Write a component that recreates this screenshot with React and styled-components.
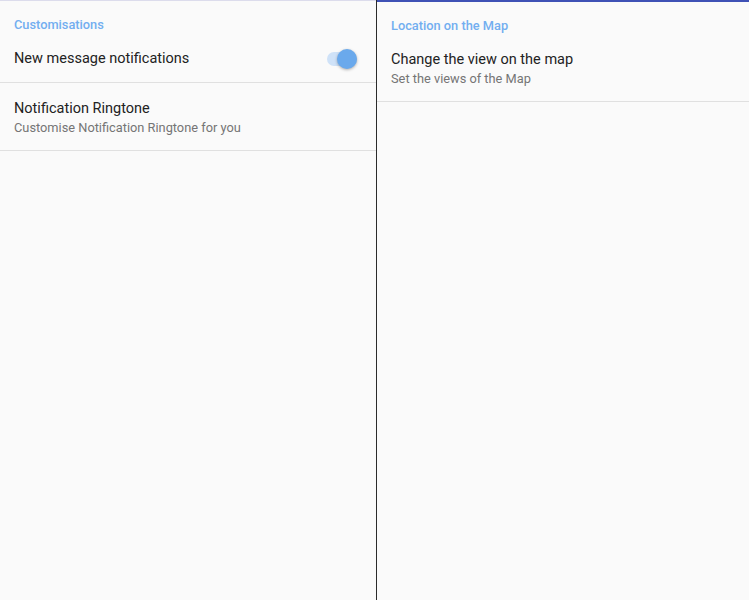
import React, { useState } from 'react';
import styled, { createGlobalStyle } from 'styled-components';

const GlobalStyle = createGlobalStyle`
  html, body {
    margin: 0;
    padding: 0;
    background: #fafafa;
    font-family: Roboto, "Noto Sans", sans-serif;
  }
  #root {
    height: 600px;
  }
`;

const Screen = styled.div`
  display: grid;
  grid-template-columns: 376px 1px 1fr;
  width: 749px;
  height: 600px;
  background: #fafafa;
  overflow: hidden;
`;

const Pane = styled.div`
  display: flex;
  flex-direction: column;
  border-top: ${p => (p.active ? '2px solid #3f51b5' : '1px solid #dcdcec')};
`;

const Divider = styled.div`
  background: #2b2b2b;
`;

const Category = styled.div`
  padding: ${p => p.pad};
  font-size: 12.8px;
  font-weight: 500;
  color: #72aef0;
  line-height: 16px;
`;

const Row = styled.div`
  display: flex;
  align-items: center;
  justify-content: space-between;
  padding: ${p => p.pad};
  border-bottom: 1px solid #e0e0e0;
`;

const Texts = styled.div`
  display: flex;
  flex-direction: column;
`;

const Title = styled.div`
  font-size: 14.5px;
  color: #222222;
  line-height: 20px;
`;

const Summary = styled.div`
  font-size: 12.8px;
  color: #757575;
  line-height: 18px;
`;

const Track = styled.button`
  position: relative;
  width: 30px;
  height: 14px;
  border: none;
  padding: 0;
  border-radius: 7px;
  background: ${p => (p.on ? '#cfe2f8' : '#c8c8c8')};
  cursor: pointer;
`;

const Thumb = styled.span`
  position: absolute;
  top: -3px;
  left: ${p => (p.on ? '10px' : '-4px')};
  width: 20px;
  height: 20px;
  border-radius: 50%;
  background: ${p => (p.on ? '#6aa9ec' : '#f1f1f1')};
  box-shadow: 0 1px 3px rgba(0, 0, 0, 0.3);
`;

const App = () => {
  const [on, setOn] = useState(true);

  return (
    <Screen>
      <GlobalStyle />
      <Pane>
        <Category pad="16px 14px 0">Customisations</Category>
        <Row pad="16px 19px 13px 14px">
          <Title>New message notifications</Title>
          <Track on={on} onClick={() => setOn(!on)}>
            <Thumb on={on} />
          </Track>
        </Row>
        <Row pad="16px 14px 13px">
          <Texts>
            <Title>Notification Ringtone</Title>
            <Summary>Customise Notification Ringtone for you</Summary>
          </Texts>
        </Row>
      </Pane>
      <Divider />
      <Pane active>
        <Category pad="16px 14px 0">Location on the Map</Category>
        <Row pad="16px 14px 13px">
          <Texts>
            <Title>Change the view on the map</Title>
            <Summary>Set the views of the Map</Summary>
          </Texts>
        </Row>
      </Pane>
    </Screen>
  );
};

export default App;
